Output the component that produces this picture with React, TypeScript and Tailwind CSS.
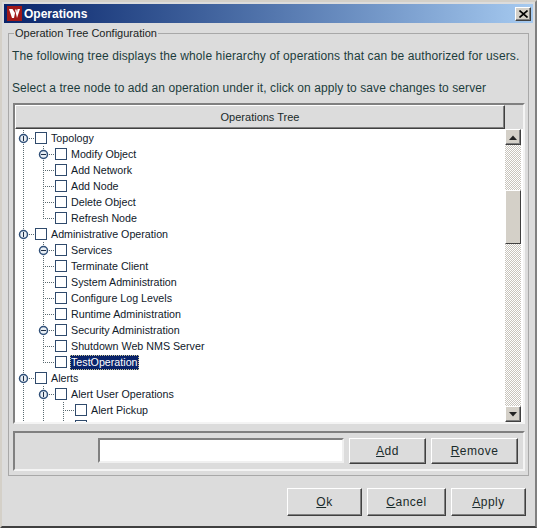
import React from 'react'

type Row = {
  label: string
  level: number
  handle?: 'open' | 'closed'
  last?: boolean
  selected?: boolean
}

const rows: Row[] = [
  { label: 'Topology', level: 0, handle: 'closed' },
  { label: 'Modify Object', level: 1, handle: 'open' },
  { label: 'Add Network', level: 1 },
  { label: 'Add Node', level: 1 },
  { label: 'Delete Object', level: 1 },
  { label: 'Refresh Node', level: 1, last: true },
  { label: 'Administrative Operation', level: 0, handle: 'closed' },
  { label: 'Services', level: 1, handle: 'open' },
  { label: 'Terminate Client', level: 1 },
  { label: 'System Administration', level: 1 },
  { label: 'Configure Log Levels', level: 1 },
  { label: 'Runtime Administration', level: 1 },
  { label: 'Security Administration', level: 1, handle: 'open' },
  { label: 'Shutdown Web NMS Server', level: 1 },
  { label: 'TestOperation', level: 1, last: true, selected: true },
  { label: 'Alerts', level: 0, handle: 'closed' },
  { label: 'Alert User Operations', level: 1, handle: 'closed' },
  { label: 'Alert Pickup', level: 2 },
  { label: 'Clear Alert', level: 2 },
]

const raised = 'border border-t-white border-l-white border-r-[#404040] border-b-[#404040] shadow-[inset_-1px_-1px_0_#808080]'

function Connector({ row }: { row: Row }) {
  const width = 20 * (row.level + 1)
  const x = 8 + 20 * row.level
  return (
    <svg width={width} height={16} className="shrink-0" fill="none">
      {/* tree guides */}
      {Array.from({ length: row.level + 1 }).map((_, i) => {
        const gx = 8.5 + 20 * i
        const isOwn = i === row.level
        const y2 = isOwn && row.last ? 8 : 16
        return <path key={i} d={`M${gx} 0V${y2}`} stroke="#5a6a70" strokeDasharray="1 1" />
      })}
      <path d={`M${x} 8.5H${width}`} stroke="#5a6a70" strokeDasharray="1 1" />
      {row.handle && (
        <g>
          <circle cx={x + 0.5} cy={8.5} r={4} fill="#e8eef4" stroke="#2f4f78" strokeWidth={1.5} />
          {row.handle === 'closed' ? (
            <path d={`M${x + 0.5} 6V11`} stroke="#1c2c44" />
          ) : (
            <path d={`M${x - 2} 8.5H${x + 3}`} stroke="#1c2c44" />
          )}
        </g>
      )}
    </svg>
  )
}

function TreeRow({ row }: { row: Row }) {
  return (
    <div className="flex h-4 shrink-0 items-center whitespace-nowrap text-[10.7px]">
      <Connector row={row} />
      <span className="h-3 w-3 shrink-0 border border-[#2f4a6c] bg-white" />
      <span
        className={
          row.selected
            ? 'ml-[3px] border border-dotted border-[#d0c890] bg-[#0a246a] leading-[13px] text-white'
            : 'ml-1 leading-4 text-[#10202a]'
        }
      >
        {row.label}
      </span>
    </div>
  )
}

function Button({ hot, rest, className }: { hot: string; rest: string; className: string }) {
  return (
    <button className={`flex items-center justify-center bg-[#dcdcdc] tracking-[0.5px] text-[#1a2a2a] ${raised} ${className}`}>
      <span className="underline">{hot}</span>
      {rest}
    </button>
  )
}

function ScrollArrow({ up }: { up?: boolean }) {
  return (
    <div className={`flex h-4 w-4 shrink-0 items-center justify-center bg-[#d4d0c8] ${raised}`}>
      <svg width="8" height="5" viewBox="0 0 8 5">
        <path d={up ? 'M0 5L4 0.5L8 5Z' : 'M0 0L4 4.5L8 0Z'} fill="#222" />
      </svg>
    </div>
  )
}

export default function App() {
  return (
    <div
      className="flex h-[528px] w-[537px] flex-col overflow-hidden border-2 border-r-[#808080] border-b-[#404040] border-t-[#d4d0c8] border-l-[#d4d0c8] bg-[#dcdcdc] text-[12px] font-['Liberation_Sans',Arial,sans-serif]"
    >
      {/* title bar */}
      <div className="mx-[2px] mt-[2px] flex h-[19px] shrink-0 items-center bg-gradient-to-r from-[#0a246a] to-[#a6caf0] pl-[3px] pr-[2px]">
        <svg width="15" height="15" viewBox="0 0 15 15" className="shrink-0">
          <rect width="15" height="15" fill="#a01818" />
          <path d="M2 3L5 12H7L8 7L5.5 3Z M8 3.5L10 12L13 3H10.5L10 6.5L9.5 3.5Z" fill="#fff" />
        </svg>
        <span className="ml-[2px] text-[12px] font-bold text-white">Operations</span>
        <div className={`ml-auto flex h-[14px] w-4 items-center justify-center bg-[#d4d0c8] ${raised}`}>
          <svg width="9" height="8" viewBox="0 0 9 8">
            <path d="M0.5 0.5L8.5 7.5M8.5 0.5L0.5 7.5" stroke="#000" strokeWidth="1.6" />
          </svg>
        </div>
      </div>

      {/* group box */}
      <fieldset className="mx-[6px] mt-[4px] h-[449px] shrink-0 border border-[#a8a8a8] pl-1 pr-[2px]">
        <legend className="ml-px px-px text-[11px] leading-[13px] text-[#1a2424]">Operation Tree Configuration</legend>
        <p className="-ml-px mt-[9px] whitespace-nowrap leading-[14px] tracking-[0.11px] text-[#1c3c3c]">
          The following tree displays the whole hierarchy of operations that can be authorized for users.
        </p>
        <p className="-ml-px mt-[18px] whitespace-nowrap leading-[14px] tracking-[0.08px] text-[#1c3c3c]">
          Select a tree node to add an operation under it, click on apply to save changes to server
        </p>

        {/* tree table */}
        <div className="mt-[8px] flex h-[321px] w-[512px] flex-col border-2 border-t-[#808080] border-l-[#808080] border-r-[#f4f4f4] border-b-[#f4f4f4] bg-white">
          <div className="flex h-[24px] w-full shrink-0 bg-[#dcdcdc]">
            <div className={`flex h-[24px] w-[490px] items-center justify-center text-[11px] text-[#1a2a2a] ${raised}`}>Operations Tree</div>
          </div>
          <div className="flex min-h-0 flex-1">
            <div className="flex min-w-0 flex-1 flex-col overflow-hidden pt-px">
              {rows.map((row) => (
                <TreeRow key={row.label} row={row} />
              ))}
            </div>
            <div className="mr-[2px] flex w-4 shrink-0 flex-col bg-[repeating-conic-gradient(#c8c4bc_0_25%,#ffffff_0_50%)] bg-[length:2px_2px]">
              <ScrollArrow up />
              <div className="mt-[45px] h-[54px] w-4 shrink-0 border border-t-white border-l-white border-r-[#404040] border-b-[#404040] bg-[#d4d0c8]" />
              <div className="flex-1" />
              <ScrollArrow />
            </div>
          </div>
        </div>

        {/* add / remove */}
        <div className="mt-[7px] flex h-10 w-[512px] items-start border-2 border-t-[#808080] border-l-[#808080] border-r-[#f4f4f4] border-b-[#f4f4f4] pl-[83px] pt-[5px]">
          <input className="h-[25px] w-[246px] border-2 border-t-[#808080] border-l-[#808080] border-r-[#f0f0f0] border-b-[#f0f0f0] bg-white" />
          <Button hot="A" rest="dd" className="ml-[5px] h-[26px] w-[77px]" />
          <Button hot="R" rest="emove" className="ml-[5px] h-[26px] w-[87px]" />
        </div>
      </fieldset>

      {/* footer buttons */}
      <div className="mt-[12px] flex justify-end pr-[9px]">
        <Button hot="O" rest="k" className="h-[28px] w-[75px]" />
        <Button hot="C" rest="ancel" className="ml-[5px] h-[28px] w-[79px]" />
        <Button hot="A" rest="pply" className="ml-[5px] h-[28px] w-[75px]" />
      </div>
    </div>
  )
}
